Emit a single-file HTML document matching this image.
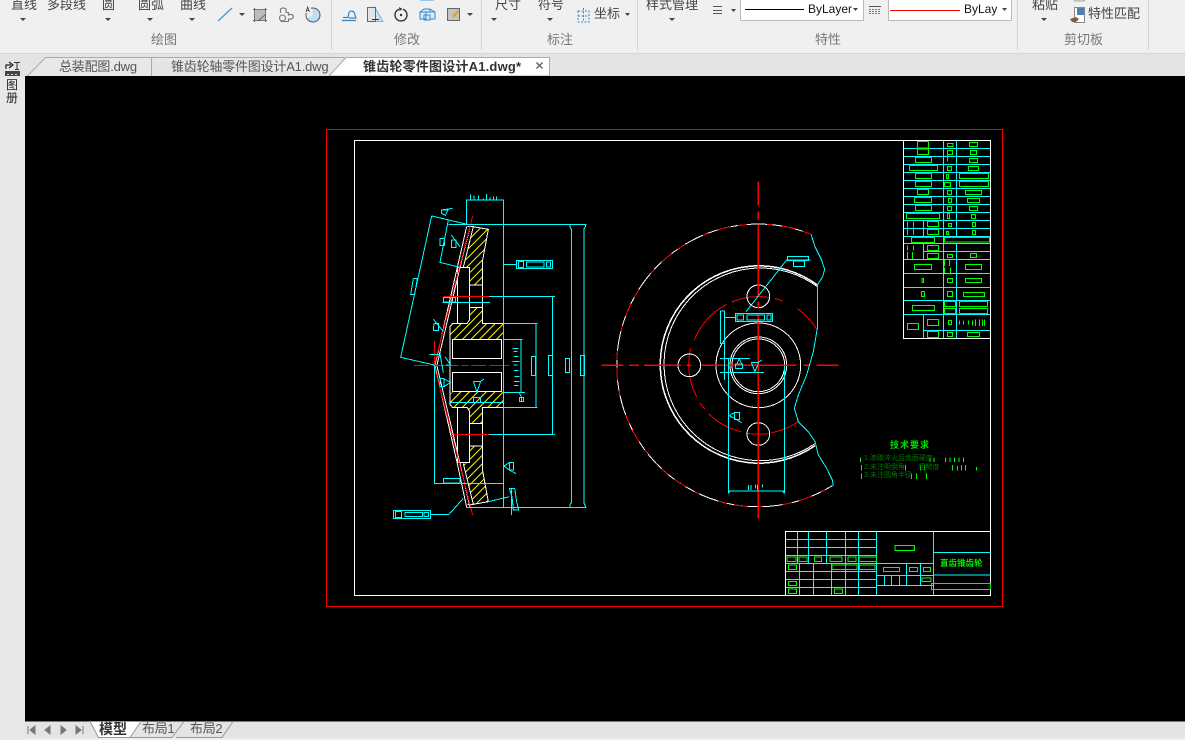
<!DOCTYPE html>
<html lang="zh"><head><meta charset="utf-8"><title>CAD</title>
<style>
html,body{margin:0;padding:0;background:#f0f0f0}
body{width:1185px;height:740px;overflow:hidden;position:relative;font-family:"Liberation Sans","Noto Sans CJK SC",sans-serif;}
.a{position:absolute;white-space:nowrap}
.t{font-size:13px;line-height:16px;color:#444}
.l{font-size:13px;line-height:16px;color:#777;top:32px}
.sep{position:absolute;top:0;width:1px;height:50px;background:#d4d4d4}
.tab{font-size:13px;line-height:16px;color:#555;top:59px;letter-spacing:-.2px}
svg{position:absolute;left:0;top:0}
</style></head><body>
<div class="a" style="left:0;top:0;width:1185px;height:53px;background:#f0f0f0"></div>
<div class="a" style="left:0;top:53px;width:1185px;height:1px;background:#d6d6d6"></div>
<div class="a" style="left:0;top:54px;width:1185px;height:22px;background:#e4e4e4"></div>
<div class="a" style="left:0;top:76px;width:25px;height:664px;background:#e8e8e8"></div>
<div class="a" style="left:25px;top:76px;width:1160px;height:645px;background:#000"></div>
<div class="a" style="left:25px;top:721px;width:1160px;height:1px;background:#777"></div>
<div class="a" style="left:25px;top:722px;width:1160px;height:16px;background:#e4e4e4"></div>
<div class="a" style="left:25px;top:738px;width:1160px;height:2px;background:#efefef"></div>

<div class="sep" style="left:331px"></div><div class="sep" style="left:481px"></div><div class="sep" style="left:637px"></div><div class="sep" style="left:1017px"></div><div class="sep" style="left:1148px"></div>

<span class="a t" style="left:11px;top:-3px">直线</span>
<span class="a t" style="left:47px;top:-3px">多段线</span>
<span class="a t" style="left:102px;top:-3px">圆</span>
<span class="a t" style="left:138px;top:-3px">圆弧</span>
<span class="a t" style="left:180px;top:-3px">曲线</span>
<span class="a t" style="left:495px;top:-3px">尺寸</span>
<span class="a t" style="left:538px;top:-3px">符号</span>
<span class="a t" style="left:594px;top:6px">坐标</span>
<span class="a t" style="left:646px;top:-3px">样式管理</span>
<span class="a t" style="left:1032px;top:-3px">粘贴</span>
<span class="a t" style="left:1088px;top:6px">特性匹配</span>
<span class="a l" style="left:151px">绘图</span>
<span class="a l" style="left:394px">修改</span>
<span class="a l" style="left:547px">标注</span>
<span class="a l" style="left:815px">特性</span>
<span class="a l" style="left:1064px">剪切板</span>

<div class="a" style="left:740px;top:-1px;width:122px;height:20px;background:#fff;border:1px solid #bbb"></div>
<div class="a" style="left:888px;top:-1px;width:122px;height:20px;background:#fff;border:1px solid #bbb"></div>
<span class="a" style="left:808px;top:2px;font-size:12px;line-height:15px;color:#111">ByLayer</span>
<span class="a" style="left:964px;top:2px;font-size:12px;line-height:15px;color:#111;width:33px;overflow:hidden">ByLayer</span>

<svg width="1185" height="76" viewBox="0 0 1185 76">
<path d="M20 18h6l-3 3zM105 18h6l-3 3zM147 18h6l-3 3zM189 18h6l-3 3zM239 13h6l-3 3zM467 13h6l-3 3zM491 18h6l-3 3zM547 18h6l-3 3zM625 13h5l-2.500 3zM669 18h6l-3 3zM731 9h5l-2.500 3zM853 8h5l-2.500 3zM1002 8h5l-2.500 3zM1041 18h6l-3 3z" fill="#444"/>
<path d="M745 9.500h59" stroke="#000"/><path d="M890 10.500h70" stroke="#f00"/>
<path d="M713 6.500h9M713 10.500h9M713 13.500h9" stroke="#555"/>
<path d="M869 6.500h12" stroke="#555"/><path d="M869 9.500h12M869 11.500h12M869 13.500h12" stroke="#777" stroke-dasharray="2 1"/>
<path d="M218 21L232 8" stroke="#3a9ad9" stroke-width="1.300" fill="none"/>
<rect x="254.500" y="9.500" width="11" height="11" fill="#bdbdbd" stroke="#777"/><path d="M253 9.500h2M265 9.500h2M253 20.500h2M265 20.500h2M254.500 8v2M265.500 8v2M254.500 20v2M265.500 20v2M258 21l8-7" stroke="#666"/>
<path d="M280.500 13V9Q283 6.800 286 9V12.500H288.500V15Q292 13.500 293.500 16Q293 20 288.500 19V21.500H280.500" fill="none" stroke="#777" stroke-width="1.100"/><circle cx="282.500" cy="18" r="3" fill="#f0f0f0" stroke="#777" stroke-width="1.100"/>
<path d="M312.500 15V8A7.500 7.500 0 0 1 318 21 7.500 7.500 0 0 1 312.500 15Z" fill="#bfe0f3"/><path d="M312.500 15H320A7.500 7.500 0 0 1 306 19" fill="#bfe0f3" stroke="none"/><circle cx="313" cy="15" r="7" fill="none" stroke="#555"/>
<path d="M306 8h5v5h-5z" fill="#f0f0f0"/><path d="M306 12l1.700-5 1.700 5M306.700 10.500h2.200" stroke="#333" fill="none" stroke-width=".8"/>
<rect x="420" y="-1" width="14" height="2" fill="#9cc8ea"/>
<path d="M342 20.500h14M343 17.500h5l1-5a3 3 0 0 1 5.500 1l1.500 4.500h-7" fill="none" stroke="#3a86c4" stroke-width="1.200"/>
<path d="M375 7.500l8 14h-8z" fill="#c4e4f5" stroke="#7ab8e0"/><rect x="367.500" y="7.500" width="8" height="14" fill="#e4e4e4" stroke="#666"/><path d="M372 19.500h7" stroke="#333"/>
<path d="M399 9.300a6 6 0 1 0 4 0" fill="none" stroke="#333" stroke-width="1.400"/><path d="M399 7l3.500 2-3 2z" fill="#333"/><circle cx="401" cy="15" r="1.200" fill="#333"/>
<path d="M420 12l4-3h6v3h-6zM420 12v7h6l0-7M430 9l5 3v7h-5M424 15h6v5h-6zM430 12h5" fill="#d8ecf8" stroke="#3a86c4"/>
<rect x="447.500" y="8.500" width="12" height="12" fill="#c4c4c4" stroke="#666"/><path d="M453 17l5-6" stroke="#e0a020" stroke-width="2.200"/>
<path d="M578 11h11v11h-11zM583.500 8v14M578 16h11" fill="none" stroke="#3a86c4" stroke-dasharray="2 1.500"/>
<rect x="1074.500" y="7.500" width="10" height="15" fill="#fff" stroke="#888"/><rect x="1077" y="8" width="7" height="7" fill="#4a80b8"/><path d="M1070 19l6-2 3 2-3 3-4 0z" fill="#8a5a2a"/>
<rect x="1074.500" y="-3" width="10" height="4" fill="#ddd" stroke="#aaa"/>
<path d="M27.500 76L45.500 57.500H151.500V76" fill="#e8e8e8" stroke="#aaa"/>
<path d="M151.500 60L152 57.500H344V76" fill="#e8e8e8" stroke="#aaa"/>
<path d="M329 76L346 57.500H549.500V76Z" fill="#fff" stroke="#aaa"/>
<path d="M536.500 62.500l6 6M542.500 62.500l-6 6" stroke="#666" stroke-width="1.500"/>
<path d="M6 69v-4h5M9 62l4 3-4 3" fill="none" stroke="#222" stroke-width="1.200"/>
<path d="M14 62.500h6M17 62.500v7M15 69.500h4" fill="none" stroke="#333"/>
<rect x="5" y="71" width="15" height="6" fill="#444"/><path d="M7 74.500h2M11 74.500h2M15 74.500h2" stroke="#ddd"/>
</svg>
<span class="a tab" style="left:59px">总装配图.dwg</span>
<span class="a tab" style="left:171px">锥齿轮轴零件图设计A1.dwg</span>
<span class="a tab" style="left:363px;color:#333;font-weight:bold;letter-spacing:.2px">锥齿轮零件图设计A1.dwg*</span>
<span class="a" style="left:6px;top:79px;font-size:12px;line-height:13px;color:#222">图<br>册</span>

<svg width="1185" height="740" viewBox="0 0 1185 740" shape-rendering="crispEdges" fill="none" style="top:0;pointer-events:none">
<defs>
<pattern id="h" patternUnits="userSpaceOnUse" width="18" height="18" patternTransform="rotate(-45)"><path d="M0 9h18" stroke="#ff0" stroke-width="2.500"/></pattern>
</defs>
<rect x="326.500" y="129.500" width="676" height="477" stroke="#f00"/>
<rect x="354.500" y="140.500" width="636" height="455" stroke="#fff"/>

<!-- left view -->
<g transform="translate(380 180) scale(.33333)" stroke-width="3">
<path fill="url(#h)" d="M280 140L325 148 308 240V315H268V265L250 262ZM268 382H308V430H370V478H218L210 470V440L218 430H262L268 420ZM218 635H370V683H308V731H268V693L262 683H218L210 673V643ZM268 798H308V873L325 965 280 973 250 851 268 848Z"/>
<g stroke="#fff">
<path d="M280 140L325 148 308 240V430H370V683H308V873L325 965 280 973M262 140L280 140M262 973L280 973"/>
<path d="M165 555L232 262 260 140M171 555L240 262 270 140M165 558L232 851 260 982M171 558L240 851 270 982M250 262L280 140M250 851L280 973"/>
<path d="M232 262H268V420L262 430H218L210 440V673L218 683H262L268 693V848H232V683M232 430V262M268 315H308M268 382H308M268 731H308M268 798H308"/>
<rect x="218" y="478" width="147" height="57"/><rect x="218" y="577" width="147" height="58"/>
<path d="M370 478V635"/>
</g>
<g stroke="#f00">
<path d="M163 555L278 108M163 558L278 1005M190 349H327M222 763H327M163 483V555"/>
<path d="M102 556H388" stroke-dasharray="45 10 80 8 20 8"/>
</g>
<g stroke="#0ff">
<path d="M259 133V60H370V982M205 133H620M260 982H620M155 108L262 133M155 108L62 532 163 555M205 120L180 247 240 262"/>
<path d="M570 133V140L574 148V968L570 975V982M616 133V140L612 146V970L616 978V982"/>
<path d="M327 349H525M517 349V763M327 763H525M370 430H473M468 430V682M370 682H473M370 478H428M423 478V637M370 637H435M187 367H330M163 555V910H370"/>
<rect x="190" y="352" width="36" height="14"/><rect x="190" y="895" width="50" height="14"/>
<rect x="455" y="530" width="12" height="56"/><rect x="505" y="526" width="12" height="60"/><rect x="556" y="535" width="13" height="42"/><rect x="601" y="526" width="13" height="60"/>
<path d="M370 253H408"/><rect x="409" y="241" width="109" height="25"/><rect x="415" y="244" width="16" height="19"/><rect x="440" y="246" width="52" height="15"/><rect x="500" y="246" width="12" height="15"/>
<path d="M250 955L207 1003H152"/><rect x="40" y="991" width="112" height="25"/><rect x="47" y="995" width="18" height="17"/><rect x="75" y="997" width="52" height="13"/><rect x="132" y="997" width="14" height="13"/>
<path d="M100 295H112L104 344H92ZM180 175H194V196H180ZM184 90H204L196 106 184 100ZM184 90L218 85M214 165L240 200M214 180H228V202H214ZM160 418L188 452M162 430H176V452H160ZM148 523H180L190 578M195 530L212 555 198 555M180 595H192V620H180ZM192 597L212 607 192 620"/>
<path d="M280 604H302L291 636ZM302 604L312 597M280 652H302V668H280ZM212 668H370"/>
<path d="M388 848H400V870H388ZM372 858L388 848M372 858L388 870 408 881M388 925H404L410 965 416 990H400L396 950ZM394 925V1005M325 965L388 950"/>
<path d="M271 44V60M282 46V60M296 46V60M310 55V60M319 42V60M330 52V60M340 50V60M350 50V60"/>
<path d="M397 505H415M400 515H413M402 530H415M397 545H418M400 555H413M402 572H415M404 590H418M402 605H418M402 617H416M418 640L424 650V665M418 652H430V665H418Z"/>
</g>
</g>

<!-- right view -->
<g transform="translate(600 175) scale(.33333)" stroke-width="3">
<path stroke="#fff" d="M633 178A424 424 0 1 0 697 932"/>
<path stroke="#f00" stroke-dasharray="28 22 40 30 16 60" d="M633 178A424 424 0 1 0 697 932"/>
<path stroke="#fff" stroke-width="4.500" d="M652 330A296 296 0 1 0 645 812"/>
<path stroke="#fff" d="M652 335A289 289 0 1 0 645 806"/>
<path stroke="#f00" d="M650 462A206 206 0 0 0 592 401M548 378A206 206 0 0 0 525 371M510 368A206 206 0 0 0 395 381M380 388A206 206 0 0 0 283 495M272 520A206 206 0 0 0 290 665M300 685A206 206 0 0 0 315 702M327 717A206 206 0 0 0 423 770M443 775A206 206 0 0 0 510 775M515 773A206 206 0 0 0 598 738"/>
<g stroke="#fff">
<circle cx="475" cy="571" r="127"/><circle cx="475" cy="571" r="85"/><circle cx="475" cy="571" r="79"/>
<circle cx="475" cy="364" r="34"/><circle cx="475" cy="777" r="34"/><circle cx="268" cy="571" r="34"/>
</g>
<path stroke="#f00" stroke-width="3.500" d="M5 571H70M87 571H117M132 571H243M260 571H275M305 571H590M610 571H632M650 571H715"/>
<path stroke="#f00" stroke-width="3.500" d="M475 20V92M475 110V135M475 150V365M475 380V400M475 420V1030" />
<path stroke="#0ff" d="M633 178L645 215 665 255 674 283 668 305 652 330V460L640 530 620 600 595 660 583 700 595 740 625 770 645 800 655 840 680 880 697 915 700 932"/>
<g stroke="#0ff">
<path d="M385 550V955M553 571V955M385 948H553"/>
<path d="M385 955L390 948M553 955L548 948"/>
<path d="M445 930V945M453 930V945M466 928V940M472 930V945M487 928V938"/>
<path d="M362 408H373V505H362ZM373 505V615M373 427H405M438 410L560 255H632M360 550H450M360 592H492"/>
<rect x="406" y="415" width="112" height="25"/><rect x="411" y="420" width="20" height="15"/><rect x="441" y="420" width="52" height="15"/><rect x="501" y="420" width="12" height="15"/>
<rect x="562" y="244" width="64" height="13"/><rect x="580" y="258" width="34" height="17"/>
<path d="M406 567H428V580H406ZM410 567L418 552 425 567M454 562H476L465 590ZM476 562L485 555"/>
<path d="M404 712H418V734H404ZM388 722L404 712M388 722L425 743"/>
</g>
</g>

<!-- parts table -->
<g transform="translate(895 135) scale(.33333)" stroke-width="3">
<path stroke="#fff" d="M25 16V610H285"/>
<g stroke="#0ff">
<path d="M27 40H285M27 64H285M27 88H285M27 112H285M27 136H285M27 160H285M27 184H285M27 208H285M27 232H285M27 256H285M27 280H285M27 304H285M27 326H285M85 350H285M27 373H285M27 415H285M27 457H285M27 496H285M27 538H285M85 586H285"/>
<path d="M145 16V610M184 16V304M184 326V415M184 415V610M85 256V304M85 326V373M85 538V610"/>
</g>
<g stroke="#0f0">
<path d="M67 19h34v20h-34zM157 25h17v10h-17zM223 22h25v13h-25zM67 42h34v17h-34zM157 46h15v13h-15zM226 46h19v13h-19zM157 59v21M61 67h49v16h-49zM223 70h25v13h-25zM43 91h85v16h-85zM157 94h13v13h-13zM220 94h31v13h-31zM61 115h49v16h-49zM154 118h7v13h-7zM193 115h88v16h-88zM61 139h49v16h-49zM148 142h19v13h-19zM193 139h88v16h-88zM67 163h34v16h-34zM157 166h13v13h-13zM211 166h49v13h-49zM58 187h52v16h-52zM160 190h10v13h-10zM217 190h37v13h-37zM61 211h49v16h-49zM157 214h13v13h-13zM223 214h25v13h-25zM34 235h100v16h-100zM157 235h7v16h-7zM229 238h13v13h-13z"/>
<path d="M37 259v41M55 259v41M97 259h34v16h-34zM160 265h10v10h-10zM232 262h10v13h-10zM97 283h34v16h-34zM154 289h7v10h-7zM232 286h10v13h-10zM49 307h70v16h-70zM148 307h136v14h-136z"/>
<path d="M37 331v16M37 351v21M55 331v16M52 351v21M97 331h34v16h-34zM97 355h34v16h-34zM157 358h16v10h-16zM226 355h19v13h-19z"/>
<path d="M58 388h52v16h-52zM211 388h49v16h-49zM148 375v18M163 375v18M148 397v17M166 397v17"/>
<path d="M81 430h5v13h-5zM157 430h16v13h-16zM211 430h49v13h-49zM79 469h10v16h-10zM157 469h16v16h-16zM205 472h64v13h-64zM52 511h67v16h-67zM148 499h34v16h-34zM193 499h85v16h-85zM148 520h34v16h-34zM193 520h85v16h-85zM37 565h34v19h-34zM97 553h34v19h-34zM160 556h10v13h-10zM97 589h34v19h-34zM157 592h16v13h-16zM217 592h37v13h-37z"/>
<path d="M193 556v13M205 556v13M220 556v13M232 556v16M241 553v20M253 553v20M262 553v20M269 553v20"/>
</g>
</g>

<!-- title block -->
<g transform="translate(780 430) scale(.33333)" stroke-width="3">
<rect x="16" y="304" width="616" height="192" stroke="#fff"/>
<g stroke="#0ff">
<path d="M16 328H289M16 352H289M16 376H289M16 400H289M16 424H289M16 448H289M16 472H289"/>
<path d="M52 304V400M85 304V400M139 304V400M196 304V400M235 304V400M58 400V496M100 400V496M154 400V496M196 400V496M235 400V496M289 304V496M460 304V496"/>
<path d="M289 400H460M289 436H460M289 466H460M379 400V466M421 400V466M313 436V466M334 436V466M358 436V466M460 367H632M460 435H632"/>
</g>
<g stroke="#0f0">
<path d="M345 346h59v16h-59zM21 381h27v14h-27zM57 381h24v14h-24zM103 381h22v14h-22zM150 381h36v14h-36zM204 381h24v14h-24zM237 381h53v14h-53zM25 405h25v14h-25zM156 405h40v14h-40zM196 405h35v14h-35zM238 405h47v14h-47zM310 412h49v13h-49zM388 412h25v13h-25zM430 412h22v13h-22zM426 444h27v11h-27zM25 454h25v13h-25zM25 477h25v14h-25zM163 477h25v14h-25zM454 460h178v19h-178z"/>
<path d="M241 82v14M450 82v14M462 82v14M496 82v14M510 82v14M523 82v14M537 82v14M550 82v14M244 105v17M376 105v17M421 105v17M433 105v17M517 105v17M532 108v14M544 105v17M556 105v17M589 111v11M244 130v17M395 130v17M409 130v17M440 130v17"/>
</g>
</g>
</svg>
<span class="a" style="left:890px;top:440px;font-size:9px;line-height:11px;letter-spacing:1px;font-weight:bold;color:#0d0">技术要求</span>
<span class="a" style="left:864px;top:455px;font-size:7px;line-height:8px;color:#070">1.渗碳淬火后齿面硬度</span>
<span class="a" style="left:864px;top:464px;font-size:7px;line-height:8px;color:#070">2.未注明倒角 &nbsp; &nbsp; &nbsp;,粗糙度</span>
<span class="a" style="left:864px;top:472px;font-size:7px;line-height:8px;color:#070">3.未注圆角半径</span>
<span class="a" style="left:940px;top:557px;font-size:8.500px;line-height:12px;font-weight:bold;color:#0e0">直齿锥齿轮</span>

<svg width="1185" height="740" viewBox="0 0 1185 740" style="pointer-events:none">
<path d="M90 721.500L98.500 737.500H130L141 721.500Z" fill="#fff" stroke="#999"/>
<path d="M131 737.500H172L184 721.500M176 737.500H222L233 721.500" fill="none" stroke="#999"/>
<path d="M28 726v8M35 726l-5 4 5 4zM50 726l-5 4 5 4zM61 726l5 4-5 4zM76 726l5 4-5 4zM83 726v8" fill="#777" stroke="#777"/>
</svg>
<span class="a" style="left:99px;top:721px;font-size:14px;line-height:17px;font-weight:bold;color:#333">模型</span>
<span class="a" style="left:142px;top:721px;font-size:13px;line-height:16px;color:#555;letter-spacing:-.3px">布局1</span>
<span class="a" style="left:190px;top:721px;font-size:13px;line-height:16px;color:#555;letter-spacing:-.3px">布局2</span>
</body></html>
